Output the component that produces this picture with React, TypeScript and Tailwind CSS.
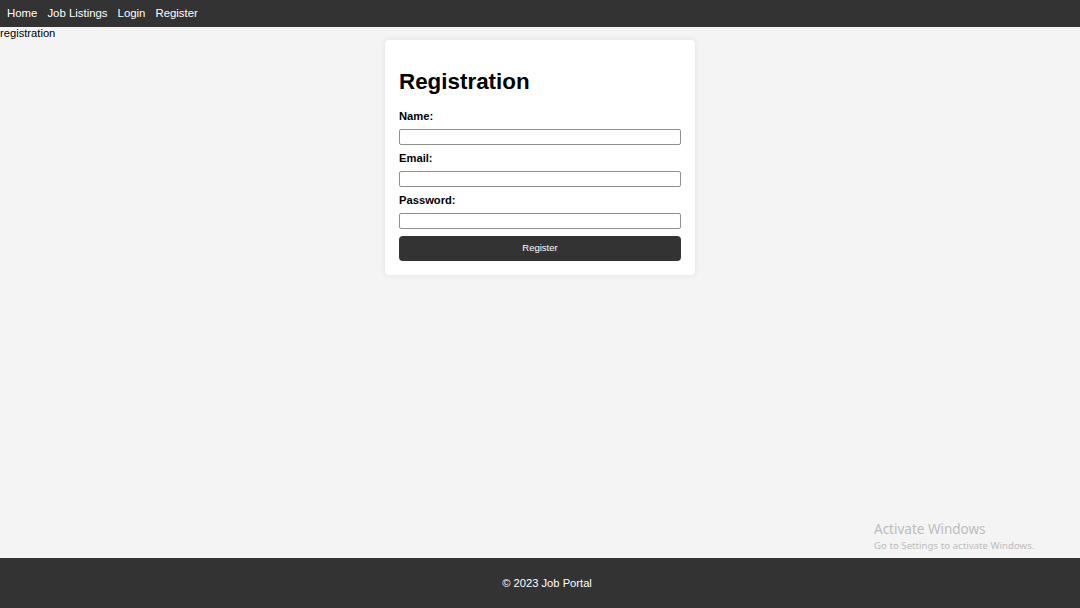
export default function App() {
  const fields = ['Name:', 'Email:', 'Password:'];
  return (
    <div className="relative min-h-screen flex flex-col bg-[#f4f4f4] text-black text-[11.2px] font-['Liberation_Sans',Arial,sans-serif]">
      <nav className="h-[27px] bg-[#333333] flex items-center gap-[10px] px-[7px] text-white text-[11.4px]">
        {['Home', 'Job Listings', 'Login', 'Register'].map(l => (
          <a key={l} href="#" className="leading-none pt-[1px]">{l}</a>
        ))}
      </nav>

      <main className="flex-1">
        <div className="leading-[13px]">registration</div>
        <div className="w-[310px] mx-auto bg-white rounded-[4px] shadow-[0_0_6px_rgba(0,0,0,0.08)] p-[14px]">
          <h1 className="text-[22.4px] font-bold leading-[25.7px] mt-[15px] mb-[15px]">Registration</h1>
          <form>
            {fields.map(f => (
              <div key={f}>
                <label className="block font-bold leading-[13px] mb-[6.5px]">{f}</label>
                <input
                  type={f === 'Password:' ? 'password' : 'text'}
                  className="block w-full h-[15.5px] mb-[7px] bg-white border border-[#8f8f8f] rounded-[2px] outline-none"
                />
              </div>
            ))}
            <button
              type="button"
              className="w-full h-[25px] bg-[#333333] text-white text-[9.5px] rounded-[4px]"
            >
              Register
            </button>
          </form>
        </div>
      </main>

      <footer className="h-[50px] bg-[#333333] text-white flex items-center justify-center pl-[14px]">
        <span className="pt-[1px]">© 2023 Job Portal</span>
      </footer>

      <div className="absolute left-[874px] top-[520px] text-[#bcbcbc] font-['Noto_Sans',sans-serif] pointer-events-none">
        <div className="text-[13.5px] leading-[19px]">Activate Windows</div>
        <div className="text-[9.7px] leading-[14px]">Go to Settings to activate Windows.</div>
      </div>
    </div>
  );
}
